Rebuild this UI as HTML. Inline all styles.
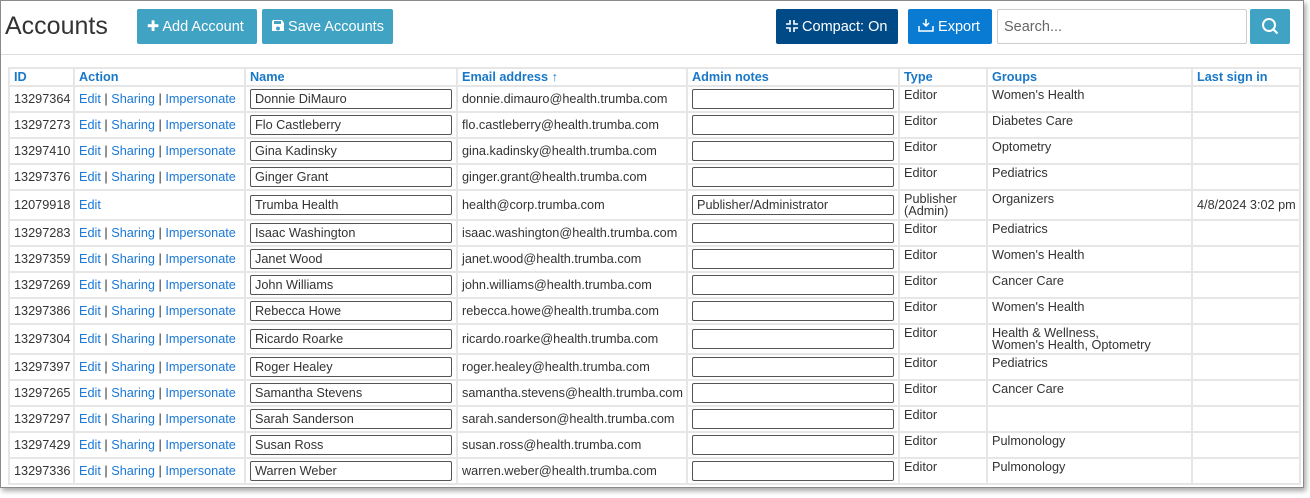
<!DOCTYPE html>
<html><head><meta charset="utf-8"><style>
body{margin:0;width:1310px;height:498px;background:#fff;font-family:"Liberation Sans",sans-serif;position:relative;overflow:hidden}
.frame{position:absolute;left:0;top:0;width:1302px;height:486px;border:1px solid #8a8a8a;box-shadow:2px 3px 5px rgba(0,0,0,.35);background:#fff}
h1{position:absolute;left:5px;top:12px;margin:0;font-weight:normal;font-size:25px;color:#333}
.btn{position:absolute;top:9px;height:35px;border-radius:2px;color:#fff;font-size:14.5px;line-height:37px;box-sizing:border-box;padding-left:10px}
.sep{position:absolute;left:1px;top:54px;width:1302px;height:1px;background:#ddd}
table{position:absolute;left:8px;top:67px;border-collapse:separate;border-spacing:2px;background:#e6e6e6;table-layout:fixed;width:1293px;font-size:12.7px;color:#333}
td,th{background:#fff;box-sizing:border-box;padding:0 4px;vertical-align:top;white-space:nowrap;overflow:hidden}
th{text-align:left;color:#1a78c8;font-weight:bold;height:16px;line-height:16px}
td{height:24px;line-height:13px}
td.m{vertical-align:middle}
tr.t td{height:28px}
a{color:#1a78d6;text-decoration:none}
.in{display:block;border:1px solid #555;border-radius:2px;line-height:18px;padding-left:4px;box-sizing:border-box;width:202px;height:20px;font-size:12.7px}
.tp{padding-top:2px}
</style></head><body>
<div class="frame"></div>
<h1>Accounts</h1>
<div class="btn" style="left:137px;width:120px;background:#41a3c4">✚ Add Account</div>
<div class="btn" style="left:262px;width:131px;background:#41a3c4"><svg width="12" height="12" viewBox="0 0 12 12" style="vertical-align:-1px"><path d="M0 1v10h12V3L10 0H1zM2 1h7v3H2zM6 6.5a2 2 0 1 1 0 4 2 2 0 0 1 0-4z" fill="#fff" fill-rule="evenodd"/></svg> Save Accounts</div>
<div class="btn" style="left:776px;width:122px;background:#004b87"><svg width="12" height="12" viewBox="0 0 12 12" style="vertical-align:-1px" fill="none" stroke="#fff" stroke-width="1.6"><path d="M4 0v4H0M8 0v4h4M4 12V8H0M8 12V8h4"/></svg> Compact: On</div>
<div class="btn" style="left:908px;width:84px;background:#0a7bd3"><svg width="16" height="13" viewBox="0 0 16 13" style="vertical-align:-1px" fill="none" stroke="#fff" stroke-width="1.5"><path d="M8 0v7M5 4l3 3 3-3M1 7v5h14V7"/></svg> Export</div>
<div style="position:absolute;left:997px;top:9px;width:250px;height:35px;border:1px solid #ccc;border-radius:2px;box-sizing:border-box;font-size:14.5px;color:#666;line-height:35px;padding-left:6px">Search...</div>
<div class="btn" style="left:1250px;width:40px;background:#41a3c4;padding:0"><svg width="40" height="35" viewBox="0 0 40 35" fill="none" stroke="#fff" stroke-width="2"><circle cx="19" cy="16" r="6"/><path d="M23.5 20.5l4 4"/></svg></div>
<div class="sep"></div>
<table>
<colgroup><col style="width:63px"><col style="width:169px"><col style="width:210px"><col style="width:228px"><col style="width:210px"><col style="width:86px"><col style="width:203px"><col style="width:106px"></colgroup>
<tr><th>ID</th><th>Action</th><th>Name</th><th>Email address <span style="font-weight:normal">↑</span></th><th>Admin notes</th><th>Type</th><th>Groups</th><th>Last sign in</th></tr>
<tr><td class="m">13297364</td><td class="m"><a>Edit</a> | <a>Sharing</a> | <a>Impersonate</a></td><td class="m"><div class="in">Donnie DiMauro</div></td><td class="m">donnie.dimauro@health.trumba.com</td><td class="m"><div class="in"></div></td><td class="tp">Editor</td><td class="tp">Women's Health</td><td></td></tr>
<tr><td class="m">13297273</td><td class="m"><a>Edit</a> | <a>Sharing</a> | <a>Impersonate</a></td><td class="m"><div class="in">Flo Castleberry</div></td><td class="m">flo.castleberry@health.trumba.com</td><td class="m"><div class="in"></div></td><td class="tp">Editor</td><td class="tp">Diabetes Care</td><td></td></tr>
<tr><td class="m">13297410</td><td class="m"><a>Edit</a> | <a>Sharing</a> | <a>Impersonate</a></td><td class="m"><div class="in">Gina Kadinsky</div></td><td class="m">gina.kadinsky@health.trumba.com</td><td class="m"><div class="in"></div></td><td class="tp">Editor</td><td class="tp">Optometry</td><td></td></tr>
<tr><td class="m">13297376</td><td class="m"><a>Edit</a> | <a>Sharing</a> | <a>Impersonate</a></td><td class="m"><div class="in">Ginger Grant</div></td><td class="m">ginger.grant@health.trumba.com</td><td class="m"><div class="in"></div></td><td class="tp">Editor</td><td class="tp">Pediatrics</td><td></td></tr>
<tr class="t"><td class="m">12079918</td><td class="m"><a>Edit</a></td><td class="m"><div class="in">Trumba Health</div></td><td class="m">health@corp.trumba.com</td><td class="m"><div class="in">Publisher/Administrator</div></td><td class="tp" style="line-height:12px">Publisher<br>(Admin)</td><td class="tp">Organizers</td><td class="m">4/8/2024 3:02 pm</td></tr>
<tr><td class="m">13297283</td><td class="m"><a>Edit</a> | <a>Sharing</a> | <a>Impersonate</a></td><td class="m"><div class="in">Isaac Washington</div></td><td class="m">isaac.washington@health.trumba.com</td><td class="m"><div class="in"></div></td><td class="tp">Editor</td><td class="tp">Pediatrics</td><td></td></tr>
<tr><td class="m">13297359</td><td class="m"><a>Edit</a> | <a>Sharing</a> | <a>Impersonate</a></td><td class="m"><div class="in">Janet Wood</div></td><td class="m">janet.wood@health.trumba.com</td><td class="m"><div class="in"></div></td><td class="tp">Editor</td><td class="tp">Women's Health</td><td></td></tr>
<tr><td class="m">13297269</td><td class="m"><a>Edit</a> | <a>Sharing</a> | <a>Impersonate</a></td><td class="m"><div class="in">John Williams</div></td><td class="m">john.williams@health.trumba.com</td><td class="m"><div class="in"></div></td><td class="tp">Editor</td><td class="tp">Cancer Care</td><td></td></tr>
<tr><td class="m">13297386</td><td class="m"><a>Edit</a> | <a>Sharing</a> | <a>Impersonate</a></td><td class="m"><div class="in">Rebecca Howe</div></td><td class="m">rebecca.howe@health.trumba.com</td><td class="m"><div class="in"></div></td><td class="tp">Editor</td><td class="tp">Women's Health</td><td></td></tr>
<tr class="t"><td class="m">13297304</td><td class="m"><a>Edit</a> | <a>Sharing</a> | <a>Impersonate</a></td><td class="m"><div class="in">Ricardo Roarke</div></td><td class="m">ricardo.roarke@health.trumba.com</td><td class="m"><div class="in"></div></td><td class="tp">Editor</td><td class="tp" style="line-height:12px">Health &amp; Wellness,<br>Women's Health, Optometry</td><td></td></tr>
<tr><td class="m">13297397</td><td class="m"><a>Edit</a> | <a>Sharing</a> | <a>Impersonate</a></td><td class="m"><div class="in">Roger Healey</div></td><td class="m">roger.healey@health.trumba.com</td><td class="m"><div class="in"></div></td><td class="tp">Editor</td><td class="tp">Pediatrics</td><td></td></tr>
<tr><td class="m">13297265</td><td class="m"><a>Edit</a> | <a>Sharing</a> | <a>Impersonate</a></td><td class="m"><div class="in">Samantha Stevens</div></td><td class="m">samantha.stevens@health.trumba.com</td><td class="m"><div class="in"></div></td><td class="tp">Editor</td><td class="tp">Cancer Care</td><td></td></tr>
<tr><td class="m">13297297</td><td class="m"><a>Edit</a> | <a>Sharing</a> | <a>Impersonate</a></td><td class="m"><div class="in">Sarah Sanderson</div></td><td class="m">sarah.sanderson@health.trumba.com</td><td class="m"><div class="in"></div></td><td class="tp">Editor</td><td class="tp"></td><td></td></tr>
<tr><td class="m">13297429</td><td class="m"><a>Edit</a> | <a>Sharing</a> | <a>Impersonate</a></td><td class="m"><div class="in">Susan Ross</div></td><td class="m">susan.ross@health.trumba.com</td><td class="m"><div class="in"></div></td><td class="tp">Editor</td><td class="tp">Pulmonology</td><td></td></tr>
<tr><td class="m">13297336</td><td class="m"><a>Edit</a> | <a>Sharing</a> | <a>Impersonate</a></td><td class="m"><div class="in">Warren Weber</div></td><td class="m">warren.weber@health.trumba.com</td><td class="m"><div class="in"></div></td><td class="tp">Editor</td><td class="tp">Pulmonology</td><td></td></tr>
</table>
</body></html>
